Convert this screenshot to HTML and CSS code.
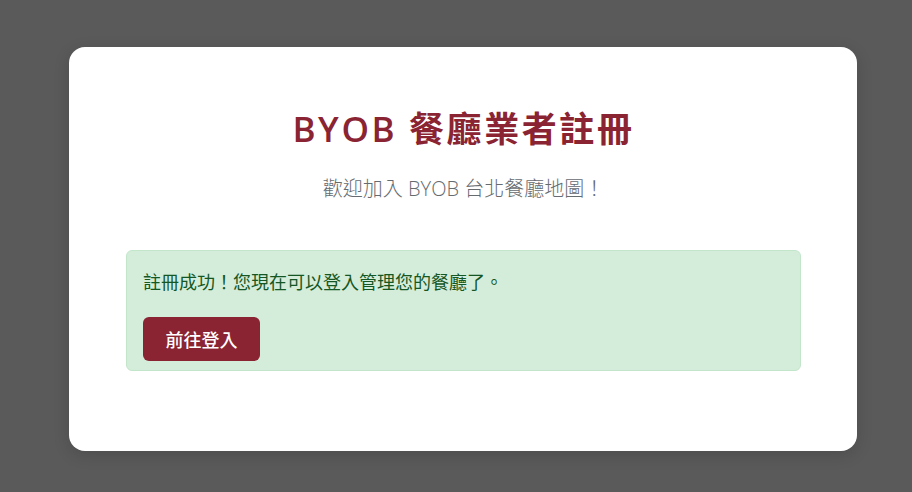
FILE: index.html
```html
<!DOCTYPE html>
<html lang="zh-Hant">
<head>
<meta charset="utf-8">
<title>BYOB 餐廳業者註冊</title>
<link rel="stylesheet" href="styles.css">
</head>
<body>
  <main class="card">
    <h1 class="title">BYOB 餐廳業者註冊</h1>
    <p class="subtitle">歡迎加入 BYOB 台北餐廳地圖！</p>
    <div class="alert">
      <p class="alert-text">註冊成功！您現在可以登入管理您的餐廳了。</p>
      <a class="btn" href="#">前往登入</a>
    </div>
  </main>
</body>
</html>
```
FILE: styles.css
```css
html, body {
  margin: 0;
  padding: 0;
}
body {
  background: #5a5a5a;
  font-family: "Open Sans", "Noto Sans CJK TC", sans-serif;
  width: 912px;
  height: 492px;
  overflow: hidden;
  padding-top: 47px;
  box-sizing: border-box;
}
.card {
  margin-left: 69px;
  width: 788px;
  height: 404px;
  box-sizing: border-box;
  background: #ffffff;
  border-radius: 16px;
  box-shadow: 0 4px 16px rgba(0,0,0,0.15);
  padding: 61px 56px 0 57px;
}
.title {
  margin: 0;
  text-align: center;
  color: #8a2433;
  font-size: 35px;
  line-height: 42px;
  font-weight: 600;
  letter-spacing: 2.6px;
}
.subtitle {
  margin: 24px 0 0;
  text-align: center;
  color: #666b70;
  font-size: 20px;
  line-height: 30px;
  font-weight: 300;
}
.alert {
  margin-top: 46px;
  background: #d4edda;
  border: 1px solid #c3e6cb;
  border-radius: 6px;
  padding: 16px 16px 9px;
}
.alert-text {
  margin: 0 0 20px;
  color: #155724;
  font-size: 18px;
  line-height: 30px;
}
.btn {
  display: inline-flex;
  align-items: center;
  justify-content: center;
  height: 44px;
  width: 117px;
  box-sizing: border-box;
  background: #8a2433;
  color: #ffffff;
  border-radius: 6px;
  text-decoration: none;
  font-size: 18px;
  font-weight: 500;
}
```
